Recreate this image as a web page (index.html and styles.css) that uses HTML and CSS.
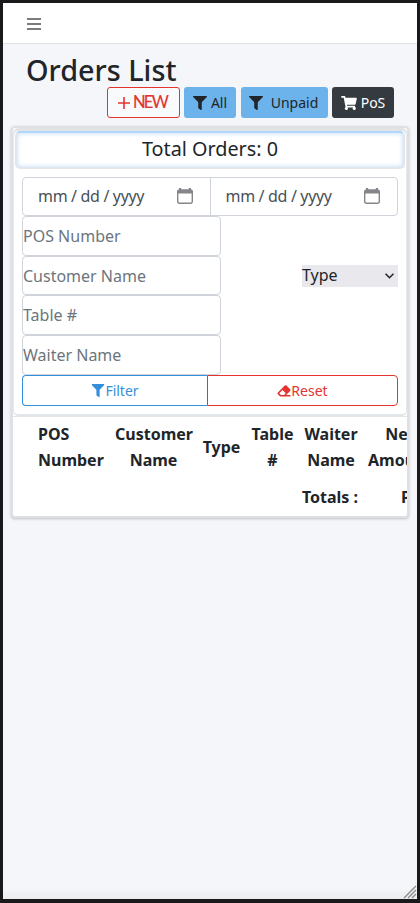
FILE: index.html
```html
<!DOCTYPE html>
<html lang="en">
<head>
<meta charset="utf-8">
<title>Orders List</title>
<link rel="stylesheet" href="styles.css">
</head>
<body>
<svg class="defs" width="0" height="0" aria-hidden="true">
  <symbol id="funnel" viewBox="0 0 512 512"><path fill="currentColor" d="M488 0H24C3 0-8 26 7 41l185 185v206c0 8 4 15 10 20l80 56c16 11 38 0 38-20V226L505 41c15-15 4-41-17-41z"/></symbol>
  <symbol id="calendar" viewBox="0 0 16 16"><path d="M2.500 2.200h11a1.800 1.800 0 0 1 1.800 1.800v9.400a1.800 1.800 0 0 1-1.800 1.800h-11A1.800 1.800 0 0 1 .7 13.400V4a1.800 1.800 0 0 1 1.800-1.800z" fill="none" stroke="currentColor" stroke-width="1.400"/><path d="M.2 5.500V3.500Q.2 1.500 2 1.500V0h2.200v1.500h7.600V0H14v1.500q1.800 0 1.800 2v2z" fill="currentColor"/></symbol>
</svg>
<div class="screen">
  <nav class="topbar">
    <svg class="menu" viewBox="0 0 14 12"><path d="M0 1h14M0 6h14M0 11h14" stroke="#7c7c7c" stroke-width="2"/></svg>
  </nav>
  <main>
    <h1>Orders List</h1>
    <div class="actions">
      <button class="btn new"><svg viewBox="0 0 12 12"><path d="M6 0v12M0 6h12" stroke="currentColor" stroke-width="1.600"/></svg><span>NEW</span></button>
      <button class="btn info all"><svg viewBox="0 0 512 512"><use href="#funnel"/></svg><span>All</span></button>
      <button class="btn info unpaid"><svg viewBox="0 0 512 512"><use href="#funnel"/></svg><span>Unpaid</span></button>
      <button class="btn dark"><svg viewBox="0 0 576 512"><path fill="currentColor" d="M528 301l47-208c4-15-8-29-23-29H159l-9-45C148 8 138 0 126 0H24C11 0 0 11 0 24v16c0 13 11 24 24 24h70l70 343a56 56 0 1 0 67 9h210a56 56 0 1 0 64-11l5-24c4-15-8-29-23-29H218l-7-32h293c12 0 21-8 24-19z"/></svg><span>PoS</span></button>
    </div>
    <section class="card">
      <div class="filters">
        <div class="total">Total Orders: 0</div>
        <form class="form">
          <div class="dates">
            <div class="date"><span>mm / dd / yyyy</span><svg viewBox="0 0 16 16"><use href="#calendar"/></svg></div>
            <div class="date"><span>mm / dd / yyyy</span><svg viewBox="0 0 16 16"><use href="#calendar"/></svg></div>
          </div>
          <div class="fields">
            <div class="inputs">
              <input placeholder="POS Number">
              <input placeholder="Customer Name">
              <input placeholder="Table #">
              <input placeholder="Waiter Name">
            </div>
            <div class="type"><span>Type</span><svg viewBox="0 0 8 5"><path d="M.5.5L4 4 7.500.5" fill="none" stroke="currentColor" stroke-width="1.400"/></svg></div>
          </div>
          <div class="submit">
            <button type="button" class="half filter"><svg viewBox="0 0 512 512"><use href="#funnel"/></svg>Filter</button>
            <button type="button" class="half reset"><svg viewBox="0 0 512 512"><path fill="currentColor" fill-rule="evenodd" d="M498 274c19-19 19-49 0-68L354 62c-19-19-49-19-68 0L14 334c-19 19-19 49 0 68l80 80c9 9 21 14 34 14h372c7 0 12-5 12-12v-40c0-7-5-12-12-12H340zM195 235l130 130-67 67H135l-64-64z"/></svg>Reset</button>
          </div>
        </form>
      </div>
      <div class="table-wrap">
        <table>
          <colgroup><col class="c-pos"><col class="c-customer"><col class="c-type"><col class="c-table"><col class="c-waiter"><col class="c-net"></colgroup>
          <thead><tr><th class="left">POS<br>Number</th><th>Customer<br>Name</th><th>Type</th><th>Table<br>#</th><th>Waiter<br>Name</th><th>Net<br>Amount</th></tr></thead>
          <tfoot><tr><th colspan="5" class="right">Totals :</th><th class="right">PKR</th></tr></tfoot>
        </table>
      </div>
    </section>
  </main>
  <svg class="grip" viewBox="0 0 14 14"><path d="M1 13L13 1M5 13l8-8M9 13l4-4" stroke="#888" stroke-width="1.300"/></svg>
</div>
</body>
</html>
```
FILE: styles.css
```css
* { box-sizing: border-box; }
body { margin: 0; font: 16px/25.6px "Noto Sans", sans-serif; color: #212529; background: #19191b; }
.defs { position: absolute; }
.screen { position: relative; height: 903px; border: 3px solid #19191b; border-bottom-width: 4px; background: linear-gradient(#f4f6fa 0 885px, #ececee 896px); overflow: hidden; }
.topbar { height: 41px; padding: 15px 24px; background: #fff; border-bottom: 1px solid #dee2e6; display: flex; }
.menu { width: 14px; height: 12px; }
main { padding: 9px 8px 0; }
h1 { margin: 0 0 0 15px; font-size: 28.8px; line-height: 34px; font-weight: 500; }
.actions { display: flex; justify-content: flex-end; gap: 4px; padding-right: 15px; }
button { font: 14px/21px "Noto Sans", sans-serif; }
.btn { height: 31px; padding: 0; border: 1px solid transparent; border-radius: 3px; display: flex; align-items: center; justify-content: center; gap: 4px; color: #212529; }
.btn svg { width: 14px; height: 14px; }
.btn.new { width: 73px; border-color: #e3342f; color: #e3342f; background: #f8fafc; gap: 3px; padding-right: 2px; }
.btn.new svg { width: 12px; height: 12px; }
.new span { font: 16.500px/21px Lato, sans-serif; letter-spacing: -1.7px; -webkit-text-stroke: .2px; }
.info { background: #6cb2eb; }
.all { width: 52px; }
.unpaid { width: 87px; margin-left: 1px; gap: 8px; padding-right: 2px; }
.dark { width: 62px; background: #343a40; color: #fff; }
.btn.dark svg { width: 16px; }
.card { margin-top: 8px; width: 398px; height: 392px; border: 2px solid #dfe0e3; border-radius: 4px; background: #fff; box-shadow: 0 1px 3px rgba(0,0,0,.22); overflow: hidden; }
.filters { height: 288px; border: 1px solid #e6e8eb; border-top: 0; border-bottom: 2px solid #e2e5e9; border-radius: 5px; padding: 3px 0 0; box-shadow: inset 0 3px #e2e3e5; }
.total { height: 38px; margin: 0 1px; border: 2px solid #e2e6ea; border-top-color: #b3d7fb; border-radius: 5px; box-shadow: inset 0 0 5px #b9dafb; text-align: center; font-size: 19.8px; line-height: 31px; }
.form { padding: 8px 8px 0; }
.dates { display: flex; height: 39px; border: 1px solid #ced4da; border-radius: 4px; }
.date { flex: 1; display: flex; align-items: center; justify-content: space-between; padding: 0 17px 0 15px; color: #495057; }
.date + .date { border-left: 1px solid #ced4da; }
.date span { letter-spacing: -.33px; }
.date svg { width: 16px; height: 16px; color: #858689; margin-top: -2px; }
.fields { display: flex; justify-content: space-between; align-items: flex-start; }
.inputs { display: grid; grid-template-rows: repeat(4, 39.7px); width: 199px; }
input { width: 100%; min-width: 0; padding: 0; border: 1px solid #ced4da; border-radius: 4px; background: #fff; font: 16px "Noto Sans", sans-serif; }
input::placeholder { color: #6c757d; opacity: 1; }
.type { width: 96px; height: 22px; margin-top: 49px; background: #e9e9ed; display: flex; align-items: center; justify-content: space-between; padding-right: 4px; }
.type svg { width: 9px; height: 6px; }
.submit { display: flex; }
.half { flex: 1; height: 31px; border: 1px solid; background: #fff; padding: 0; display: flex; align-items: center; justify-content: center; }
.half svg { width: 14px; height: 13px; }
.filter { color: #3490dc; border-radius: 4px 0 0 4px; border-right: 0; }
.reset { flex: 0 0 191px; color: #e3342f; border-radius: 0 4px 4px 0; }
.table-wrap { overflow: hidden; height: 100px; border-top: 1px solid #e2e5e9; }
table { table-layout: fixed; width: 404px; border-collapse: collapse; margin-left: 20px; }
th { padding: 5px 5px 3px; font-weight: 700; text-align: center; }
tfoot th { padding-top: 9px; }
.left { text-align: left; }
.right { text-align: right; }
.c-pos { width: 77px; }
.c-customer { width: 87px; }
.c-type { width: 49px; }
.c-table { width: 53px; }
.c-waiter { width: 64px; }
.c-net { width: 74px; }
.grip { position: absolute; right: 0; bottom: 0; width: 14px; height: 14px; }
```
